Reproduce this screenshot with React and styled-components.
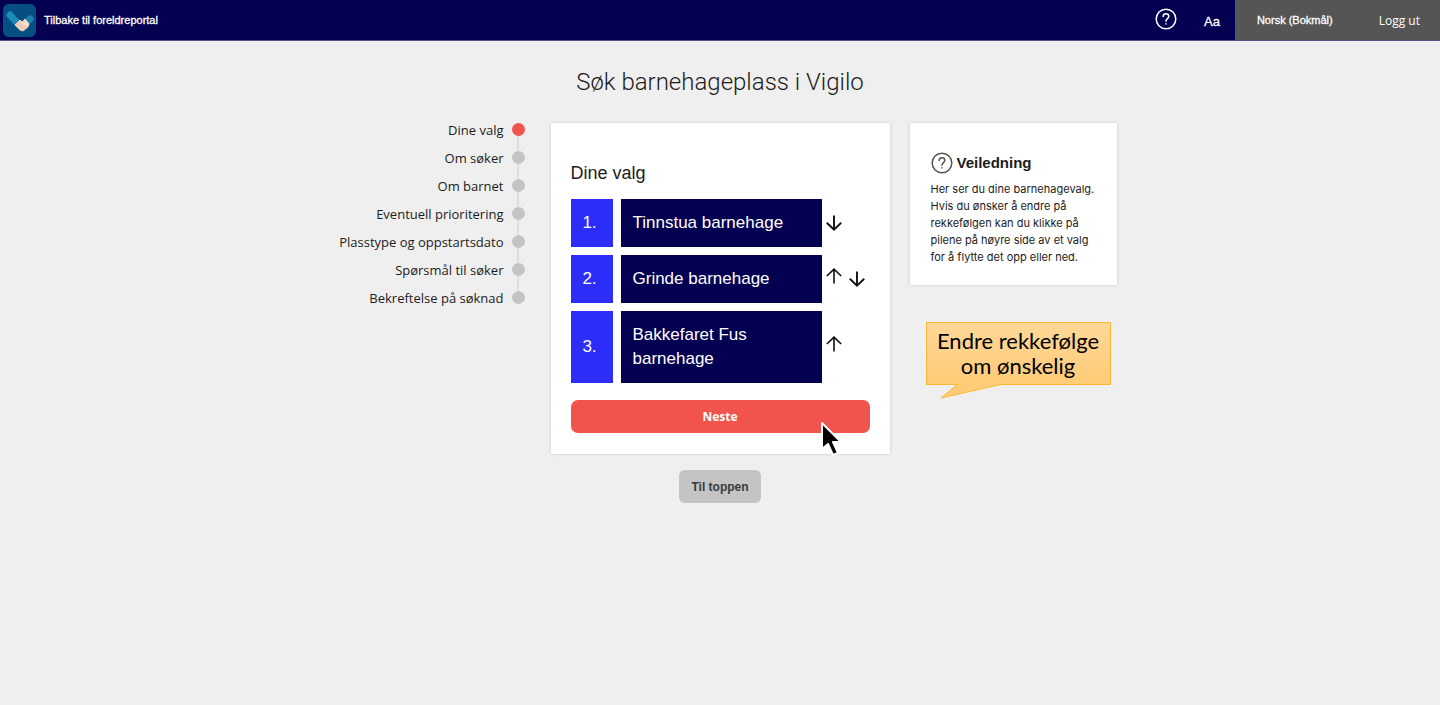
import React from "react";
import styled, { createGlobalStyle } from "styled-components";

const sans = '"Liberation Sans", Arial, sans-serif';
const humanist = '"Open Sans", "Noto Sans", sans-serif';
const neutral = 'Inter, "Liberation Sans", sans-serif';

const GlobalStyle = createGlobalStyle`
  *, *::before, *::after { box-sizing: border-box; }
  body {
    margin: 0;
    background: #efefef;
    color: #1c1c1c;
    font-family: ${sans};
  }
  h1, h2, p, ol { margin: 0; padding: 0; }
  ol { list-style: none; }
  button { font: inherit; color: inherit; cursor: pointer; }
`;

const TopBar = styled.header`
  display: flex;
  align-items: stretch;
  justify-content: space-between;
  height: 41px;
  background: #040052;
  border-bottom: 1px solid #55528a;
  color: #fff;
`;

const HomeLink = styled.a`
  display: flex;
  align-items: center;
  gap: 8px;
  padding-left: 3px;
  color: #fff;
  font-size: 11px;
  -webkit-text-stroke: 0.3px #fff;
  text-decoration: none;
`;

const BarTools = styled.nav`
  display: flex;
`;

const BarButton = styled.button`
  display: flex;
  align-items: center;
  padding: ${(p) => p.$pad};
  border: 0;
  background: none;
  color: #fff;
  font-family: ${(p) => p.$font || sans};
  font-size: ${(p) => p.$size || "12px"};
  -webkit-text-stroke: ${(p) => (p.$strong ? "0.3px #fff" : "0")};
`;

const Account = styled.div`
  display: flex;
  background: #555;
`;

const Main = styled.main`
  display: flex;
  flex-direction: column;
  align-items: center;
  padding: 24px 20px;
`;

const PageTitle = styled.h1`
  font-family: Roboto, ${sans};
  font-size: 24px;
  font-weight: 300;
  line-height: 34px;
  text-align: center;
`;

const Columns = styled.div`
  display: grid;
  grid-template-columns: minmax(0, 1fr) minmax(0, 339px) minmax(0, 1fr);
  gap: 20px;
  align-items: start;
  width: 100%;
  margin-top: 24px;
`;

const Steps = styled.ol`
  justify-self: end;
  padding-right: 6px;
`;

const Step = styled.li`
  display: flex;
  justify-content: flex-end;
  gap: 8px;
  height: 28px;
  font-family: ${humanist};
  font-size: 13px;
  line-height: 15px;
`;

const Track = styled.span`
  display: flex;
  flex-direction: column;
  align-items: center;

  &::before {
    content: "";
    flex: none;
    width: 13px;
    height: 13px;
    border-radius: 50%;
    background: ${(p) => (p.$active ? "#f0544c" : "#c4c4c4")};
  }

  &::after {
    content: "";
    flex: 1;
    width: 2px;
    background: ${(p) => (p.$last ? "transparent" : "#dcdcdc")};
  }
`;

const Card = styled.section`
  background: #fff;
  box-shadow: 0 0 3px rgba(0, 0, 0, 0.16);
`;

const ChoiceCard = styled(Card)`
  position: relative;
  padding: 36px 20px 21px;
`;

const CardTitle = styled.h2`
  font-size: 18px;
  font-weight: 400;
  line-height: 28px;
`;

const Choices = styled.ol`
  display: flex;
  flex-direction: column;
  gap: 8px;
  margin-top: 12px;
`;

const Choice = styled.li`
  display: flex;
  color: #fff;
  font-size: 17px;
  line-height: 24px;
`;

const Rank = styled.span`
  display: flex;
  flex: none;
  align-items: center;
  justify-content: center;
  width: 42px;
  margin-right: 8px;
  padding-right: 4px;
  background: #2d2dfa;
`;

const Kindergarten = styled.span`
  flex: 0 1 201px;
  padding: 12px;
  background: #040052;
`;

const Arrows = styled.span`
  display: flex;
  align-items: center;
  gap: 7px;
  padding-left: 4px;
`;

const ArrowButton = styled.button`
  display: flex;
  padding: ${(p) => (p.$up ? "0 0 6px" : "0")};
  border: 0;
  background: none;
  color: #111;
`;

const NextButton = styled.button`
  display: block;
  width: 100%;
  height: 33px;
  margin-top: 17px;
  padding: 0;
  border: 0;
  border-radius: 7px;
  background: #f0544c;
  color: #fff;
  font-family: ${humanist};
  font-size: 12px;
  font-weight: 700;
`;

const Pointer = styled.svg`
  position: absolute;
  right: 47px;
  bottom: -3px;
`;

const TopButton = styled.button`
  height: 33px;
  margin-top: 16px;
  padding: 0 12px;
  border: 0;
  border-radius: 6px;
  background: #c4c4c4;
  color: #3a3a3a;
  font-size: 12px;
  font-weight: 700;
`;

const Side = styled.aside`
  display: flex;
  flex-direction: column;
  gap: 37px;
  max-width: 207px;
`;

const GuideCard = styled(Card)`
  padding: 28px 20px 19px 21px;
`;

const GuideTitle = styled.h2`
  display: flex;
  align-items: center;
  gap: 4px;
  font-size: 15px;
  line-height: 24px;
`;

const GuideText = styled.p`
  margin-top: 6px;
  font-family: ${neutral};
  font-size: 11px;
  line-height: 17px;
`;

const Callout = styled.p`
  position: relative;
  align-self: center;
  width: 185px;
  margin-left: 10px;
  border: 1px solid #fcb831;
  background: linear-gradient(#ffd797, #ffcc78);
  color: #000;
  font-family: Lato, sans-serif;
  font-size: 22px;
  line-height: 25px;
  padding: 5px 0 6px;
  text-align: center;
`;

const Tail = styled.svg`
  position: absolute;
  top: 100%;
  left: 12px;
  margin-top: -1px;
`;

function Logo() {
  return (
    <svg width="33" height="33" viewBox="0 0 33 33" aria-hidden="true">
      <rect width="33" height="33" rx="6" fill="#064f82" />
      <path d="M7 11 17 22" stroke="#1d8ab8" strokeWidth="7" strokeLinecap="round" />
      <path d="M27 15 20 22" stroke="#1b80b0" strokeWidth="7" strokeLinecap="round" />
      <path d="M12 21 17 16 19 18 22 15 26 20 25 23 20 27 17 26Z" fill="#eccbb8" stroke="#eccbb8" strokeLinejoin="round" />
      <path d="M17 16 20 19 23 16 26 20 24 22 19 20Z" fill="#f9e2d1" />
    </svg>
  );
}

function QuestionIcon({ width = 1.5, color = "currentColor" }) {
  return (
    <svg width="22" height="22" viewBox="0 0 22 22" fill="none" stroke={color} strokeWidth={width} strokeLinecap="round" aria-hidden="true">
      <circle cx="11" cy="11" r="9.8" />
      <path d="M8.2 8.4C8.2 6.6 9.4 5.7 11 5.7s2.8 1 2.8 2.6c0 2.2-2.8 2.4-2.8 4.9" />
      <path d="M11 15.8v.2" />
    </svg>
  );
}

function Arrow({ up }) {
  return (
    <svg width="16" height="16" viewBox="0 0 16 16" fill="none" stroke="currentColor" strokeWidth={up ? 1.6 : 1.9} aria-hidden="true">
      {up ? <path d="M8 15.5V1.5M.8 8 8 1.2 15.2 8" /> : <path d="M8 .5V14.5M.8 7.8 8 14.6 15.2 7.8" />}
    </svg>
  );
}

const steps = [
  "Dine valg",
  "Om søker",
  "Om barnet",
  "Eventuell prioritering",
  "Plasstype og oppstartsdato",
  "Spørsmål til søker",
  "Bekreftelse på søknad",
];

const choices = ["Tinnstua barnehage", "Grinde barnehage", "Bakkefaret Fus barnehage"];

export default function App() {
  return (
    <>
      <GlobalStyle />
      <TopBar>
        <HomeLink href="#">
          <Logo />
          Tilbake til foreldreportal
        </HomeLink>
        <BarTools>
          <BarButton $pad="0 14px 2px" aria-label="Hjelp">
            <QuestionIcon />
          </BarButton>
          <BarButton $pad="2px 15px 0 13px" $size="13px" $strong>
            Aa
          </BarButton>
          <Account>
            <BarButton $pad="0 24px 0 22px" $size="11px" $strong>
              Norsk (Bokmål)
            </BarButton>
            <BarButton $pad="0 20px 0 22px" $font={humanist}>
              Logg ut
            </BarButton>
          </Account>
        </BarTools>
      </TopBar>
      <Main>
        <PageTitle>Søk barnehageplass i Vigilo</PageTitle>
        <Columns>
          <Steps>
            {steps.map((name, i) => (
              <Step key={name} aria-current={i === 0 ? "step" : undefined}>
                {name}
                <Track $active={i === 0} $last={i === steps.length - 1} />
              </Step>
            ))}
          </Steps>
          <ChoiceCard>
            <CardTitle>Dine valg</CardTitle>
            <Choices>
              {choices.map((name, i) => (
                <Choice key={name}>
                  <Rank>{i + 1}.</Rank>
                  <Kindergarten>{name}</Kindergarten>
                  <Arrows>
                    {i > 0 && (
                      <ArrowButton $up aria-label={`Flytt ${name} opp`}>
                        <Arrow up />
                      </ArrowButton>
                    )}
                    {i < choices.length - 1 && (
                      <ArrowButton aria-label={`Flytt ${name} ned`}>
                        <Arrow />
                      </ArrowButton>
                    )}
                  </Arrows>
                </Choice>
              ))}
            </Choices>
            <NextButton>Neste</NextButton>
            <Pointer width="23" height="36" viewBox="0 0 23 36" aria-hidden="true">
              <path d="M2 2V28L8 23 13 34 18 32 13 21H21Z" fill="#000" stroke="#fff" strokeWidth="2" strokeLinejoin="round" />
            </Pointer>
          </ChoiceCard>
          <Side>
            <GuideCard>
              <GuideTitle>
                <QuestionIcon color="#555" />
                Veiledning
              </GuideTitle>
              <GuideText>
                Her ser du dine barnehagevalg. Hvis du ønsker å endre på rekkefølgen kan du klikke på pilene på høyre
                side av et valg for å flytte det opp eller ned.
              </GuideText>
            </GuideCard>
            <Callout>
              Endre rekkefølge om ønskelig
              <Tail width="66" height="17" viewBox="0 0 66 17" aria-hidden="true">
                <path d="M19 1 2 15 64 1V0H19Z" fill="#ffcc78" />
                <path d="M19 1 2 15 64 1" fill="none" stroke="#fcb831" />
              </Tail>
            </Callout>
          </Side>
        </Columns>
        <TopButton>Til toppen</TopButton>
      </Main>
    </>
  );
}
